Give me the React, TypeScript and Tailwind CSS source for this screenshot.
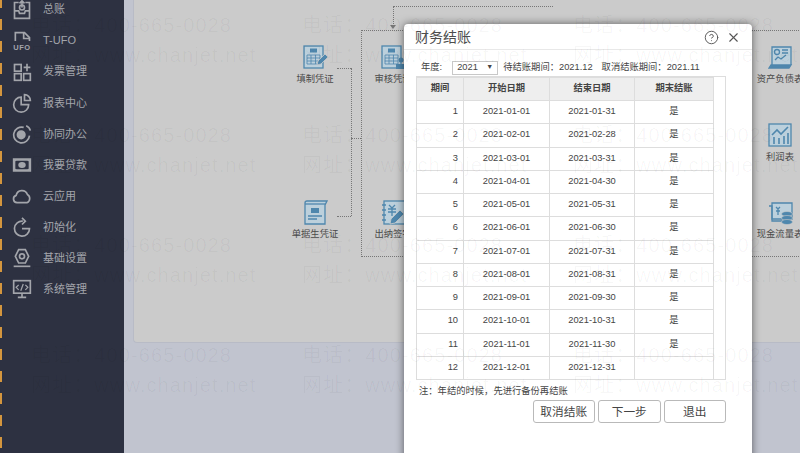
import React from 'react';
import { X, CircleHelp } from 'lucide-react';

const Svg = ({ children, className = 'h-5 w-5' }: { children: React.ReactNode; className?: string }) => (
  <svg viewBox="0 0 24 24" fill="none" stroke="currentColor" strokeWidth="2" className={className}>
    {children}
  </svg>
);

const menu: { label: string; icon: React.ReactNode }[] = [
  {
    label: '总账',
    icon: (
      <Svg>
        <path d="M8 3H3v19h18V3h-5" />
        <path d="M12 9V1M9 4l3-3 3 3" />
        <path d="M3 13h5l1 3h6l1-3h5" />
        <circle cx="12" cy="9" r="3" />
      </Svg>
    ),
  },
  {
    label: 'T-UFO',
    icon: (
      <svg viewBox="0 0 24 24" className="h-5 w-5" fill="none" stroke="currentColor" strokeWidth="2">
        <path d="M4 12V2h11l6 6v4" />
        <path d="M14 2v7h7" />
        <text x="12" y="23" textAnchor="middle" fontSize="9" fontWeight="700" fill="currentColor" stroke="none" letterSpacing="0.6">
          UFO
        </text>
      </svg>
    ),
  },
  {
    label: '发票管理',
    icon: (
      <Svg>
        <rect x="3" y="3" width="8" height="8" />
        <rect x="3" y="14" width="8" height="8" />
        <rect x="14" y="14" width="8" height="8" />
        <path d="M18 2v9M14 6.500h8" />
      </Svg>
    ),
  },
  {
    label: '报表中心',
    icon: (
      <Svg>
        <path d="M11 5a9 9 0 1 0 9 9h-9z" />
        <path d="M15 2a7 7 0 0 1 7 7h-7z" />
      </Svg>
    ),
  },
  {
    label: '协同办公',
    icon: (
      <Svg>
        <circle cx="11" cy="13" r="4.500" fill="currentColor" />
        <path d="M14 4a9.500 9.500 0 1 0 7 10" />
        <path d="M17 2a8 8 0 0 1 5 6" />
      </Svg>
    ),
  },
  {
    label: '我要贷款',
    icon: (
      <svg viewBox="0 0 24 24" className="h-5 w-5" fill="currentColor">
        <path d="M1 4h22v16H1zM4 7v10h16V7z" fillRule="evenodd" />
        <ellipse cx="12" cy="12" rx="4.500" ry="3.500" />
        <path d="M2 5h5L2 9zM22 5h-5l5 4zM2 19h5l-5-4zM22 19h-5l5-4z" />
      </svg>
    ),
  },
  {
    label: '云应用',
    icon: (
      <Svg>
        <path d="M6 20a4.500 4.500 0 0 1-1-8.800 7 7 0 0 1 13.500-1A5.500 5.500 0 0 1 18 20z" />
      </Svg>
    ),
  },
  {
    label: '初始化',
    icon: (
      <Svg>
        <path d="M13 5a9 9 0 1 0 8 9h-9" />
        <path d="M12 1l4 4-4 4" />
      </Svg>
    ),
  },
  {
    label: '基础设置',
    icon: (
      <Svg>
        <path d="M8 2h8l4 8-4 8H8L4 10z" />
        <circle cx="12" cy="10" r="3" />
        <path d="M2 22h20" />
      </Svg>
    ),
  },
  {
    label: '系统管理',
    icon: (
      <Svg>
        <rect x="2" y="2" width="20" height="15" />
        <path d="M12 17v5M7 22h10" />
        <path d="M8 7l-3 3 3 3M16 7l3 3-3 3M13.500 6l-3 8" strokeWidth="1.500" />
      </Svg>
    ),
  },
];

const DocIcon = ({ kind }: { kind: string }) => (
  <svg viewBox="0 0 25 25" className="h-[25px] w-[25px] text-[#4f87ad]" fill="none" stroke="currentColor" strokeWidth="1.300">
    {kind === 'fill' && (
      <>
        <rect x="1" y="1" width="19" height="22" fill="#bcd0dc" />
        <rect x="7" y="3.500" width="7" height="4" fill="#4f87ad" stroke="none" />
        <path d="M4 10h13v9H4zM4 13h13M4 16h13M8 10v9M12.500 10v9" strokeWidth="0.800" />
        <path d="M14 20l1-4 7-7 3 3-7 7z" fill="#4f87ad" stroke="#cbcbcb" strokeWidth="0.800" />
      </>
    )}
    {kind === 'audit' && (
      <>
        <rect x="1" y="1" width="19" height="22" fill="#bcd0dc" />
        <rect x="7" y="3.500" width="7" height="4" fill="#4f87ad" stroke="none" />
        <path d="M4 10h13v9H4zM4 13h13M4 16h13M8 10v9M12.500 10v9" strokeWidth="0.800" />
        <circle cx="20" cy="15" r="2.500" fill="#4f87ad" stroke="none" />
        <rect x="15" y="19" width="10" height="5" fill="#4f87ad" stroke="none" />
      </>
    )}
    {kind === 'receipt' && (
      <>
        <path d="M2 24V3a2 2 0 0 1 2-2h20l-2 4v19H2z" fill="#bcd0dc" />
        <path d="M2 4h20" />
        <rect x="8" y="8" width="8" height="5" fill="#4f87ad" stroke="none" />
        <path d="M5 16h14M5 19h9" />
      </>
    )}
    {kind === 'cash' && (
      <>
        <rect x="3" y="1" width="21" height="23" fill="#bcd0dc" />
        <path d="M1 5h4M1 10h4M1 15h4M1 20h4" />
        <path d="M8 5l3 3 3-3M7 9h8M7 12h8M11 8v8" />
        <path d="M9 24l1-5 9-9 4 4-9 9z" fill="#4f87ad" stroke="#cbcbcb" strokeWidth="0.800" />
      </>
    )}
    {kind === 'balance' && (
      <>
        <path d="M4 20V2h19v18" fill="#bcd0dc" />
        <path d="M1 23l2-3h20l-2 3z" fill="#4f87ad" />
        <circle cx="9" cy="7" r="2.500" />
        <path d="M14 5h6M14 8h6M7 15l3-3 3 2 5-4" />
      </>
    )}
    {kind === 'profit' && (
      <>
        <rect x="1" y="1" width="22" height="22" fill="#bcd0dc" />
        <path d="M4 12l5-5 4 4 7-7" strokeWidth="1.600" />
        <path d="M6 14v7M11 15v6M16 13v8M20 10v11" strokeWidth="1.600" />
      </>
    )}
    {kind === 'flow' && (
      <>
        <path d="M4 3h20v16H4z" fill="#bcd0dc" />
        <path d="M1 6h3v15h12" />
        <path d="M8 7l2 2 2-2M8 11h4M10 9v6" />
        <ellipse cx="19" cy="14" rx="5.500" ry="2.500" fill="#4f87ad" stroke="#cbcbcb" strokeWidth="0.600" />
        <ellipse cx="19" cy="18" rx="5.500" ry="2.500" fill="#4f87ad" stroke="#cbcbcb" strokeWidth="0.600" />
        <ellipse cx="19" cy="22" rx="5.500" ry="2.500" fill="#4f87ad" stroke="#cbcbcb" strokeWidth="0.600" />
      </>
    )}
  </svg>
);

const Node = ({ kind, label, className }: { kind: string; label: string; className: string }) => (
  <div className={`absolute flex w-[70px] flex-col items-center gap-[3px] text-[9.300px] leading-[12px] whitespace-nowrap text-[#4a4a4a] ${className}`}>
    <DocIcon kind={kind} />
    <span>{label}</span>
  </div>
);

const months = [
  ['2021-01-01', '2021-01-31'],
  ['2021-02-01', '2021-02-28'],
  ['2021-03-01', '2021-03-31'],
  ['2021-04-01', '2021-04-30'],
  ['2021-05-01', '2021-05-31'],
  ['2021-06-01', '2021-06-30'],
  ['2021-07-01', '2021-07-31'],
  ['2021-08-01', '2021-08-31'],
  ['2021-09-01', '2021-09-30'],
  ['2021-10-01', '2021-10-31'],
  ['2021-11-01', '2021-11-30'],
  ['2021-12-01', '2021-12-31'],
];

const Watermark = () => (
  <div className="pointer-events-none absolute inset-0 z-30 overflow-hidden">
    <div className="ml-[-240px] mt-[14px] grid w-[1300px] grid-cols-[repeat(4,271px)] auto-rows-[110px]">
      {Array.from({ length: 16 }).map((_, i) => (
        <div key={i} className="flex flex-col gap-[8px] text-[20px] leading-[22px] tracking-[1.100px] whitespace-nowrap text-black/[0.035]">
          <span>电话：400-665-0028</span>
          <span>网址：www.chanjet.net</span>
        </div>
      ))}
    </div>
  </div>
);

export default function App() {
  return (
    <div className="relative flex h-[453px] w-[800px] overflow-hidden bg-[#c1c4cf] font-['Liberation_Sans','Noto_Sans_CJK_SC',sans-serif]">
      <aside className="h-full w-[124px] shrink-0 bg-[#2d3141] text-[#a3a5ab]">
        <div className="flex h-full">
          <div className="h-full w-[2px] bg-[repeating-linear-gradient(to_bottom,#d4963e_0,#d4963e_8px,transparent_8px,transparent_19px,#d4963e_19px,#d4963e_22px)]" />
          <nav className="mt-[-6px] flex flex-col">
            {menu.map((m) => (
              <div key={m.label} className="flex h-[31.100px] items-center gap-[10px] pl-[10px] text-[11px]">
                <span className="flex w-[20px] justify-center">{m.icon}</span>
                <span className="ml-[1px]">{m.label}</span>
              </div>
            ))}
          </nav>
        </div>
      </aside>

      <main className="flex-1 pl-[9px]">
        <div className="relative h-[343px] rounded-bl-[4px] border-b border-l border-[#b8bbc6] bg-[#cbcbcb]">
          <Node kind="fill" label="填制凭证" className="left-[146px] top-[45px]" />
          <Node kind="audit" label="审核凭证" className="left-[224px] top-[45px]" />
          <Node kind="receipt" label="单据生凭证" className="left-[146px] top-[200px]" />
          <Node kind="cash" label="出纳签字" className="left-[224px] top-[200px]" />
          <Node kind="balance" label="资产负债表" className="left-[611px] top-[45px]" />
          <Node kind="profit" label="利润表" className="left-[611px] top-[123px]" />
          <Node kind="flow" label="现金流量表" className="left-[611px] top-[200px]" />

          {/* connectors */}
          <div className="absolute left-[203px] top-[68px] h-0 w-[14px] border-t border-dotted border-[#777]" />
          <div className="absolute left-[203px] top-[216px] h-0 w-[14px] border-t border-dotted border-[#777]" />
          <div className="absolute left-[217px] top-[68px] h-[148px] w-0 border-l border-dotted border-[#777]" />
          <div className="absolute left-[217px] top-[138px] h-0 w-[10px] border-t border-dotted border-[#777]" />
          <div className="absolute left-[227px] top-[30px] h-[227px] w-[460px] border border-dotted border-[#777]" />
          <div className="absolute left-[259px] top-[6px] h-[20px] w-[160px] border-l border-t border-dotted border-[#777]" />
          <div className="absolute left-[256px] top-[25px] h-0 w-0 border-x-[3.500px] border-t-[4px] border-x-transparent border-t-[#777]" />
        </div>
      </main>

      <section className="absolute left-[404px] top-[24px] z-20 h-[440px] w-[348px] rounded-[4px] bg-white px-[12px] shadow-[0_0_8px_rgba(0,0,0,0.55)]">
        <header className="-mx-[12px] flex h-[26px] items-center justify-between border-b border-[#e8e8e8] pl-[11px] pr-[11px] pt-[1px]">
          <h1 className="text-[14px] font-normal text-[#4d4d4d]">财务结账</h1>
          <div className="flex items-center gap-[7px] text-[#555]">
            <CircleHelp size={15} strokeWidth={1.500} />
            <X size={15} strokeWidth={1.800} />
          </div>
        </header>

        <div className="flex h-[26px] items-center whitespace-nowrap pl-[5px] pt-[9px] text-[9.300px] text-[#444]">
          <span>年度:</span>
          <div className="ml-[10px] flex h-[14px] w-[46px] items-center justify-between border border-[#c8c8c8] px-[4px] text-[9.300px]">
            <span>2021</span>
            <span className="text-[7px]">▼</span>
          </div>
          <span className="ml-[5px]">待结账期间：2021.12</span>
          <span className="ml-[9px]">取消结账期间：2021.11</span>
        </div>

        <div className="h-[304px] w-[310px] border-y border-r border-[#dddddd]">
          <table className="w-[297px] table-fixed border-collapse text-[9.300px] text-[#444]">
            <thead>
              <tr className="h-[23px] bg-[#eeeeee]">
                <th className="w-[47px] border border-[#dddddd] font-bold">期间</th>
                <th className="w-[86px] border border-[#dddddd] font-bold">开始日期</th>
                <th className="w-[85px] border border-[#dddddd] font-bold">结束日期</th>
                <th className="w-[79px] border border-[#dddddd] font-bold">期末结账</th>
              </tr>
            </thead>
            <tbody>
              {months.map((m, i) => (
                <tr key={m[0]} className="h-[23.250px]">
                  <td className="border border-[#dddddd] pr-[5px] text-right">{i + 1}</td>
                  <td className="border border-[#dddddd] text-center">{m[0]}</td>
                  <td className="border border-[#dddddd] text-center">{m[1]}</td>
                  <td className="border border-[#dddddd] text-center">{i < 11 ? '是' : ''}</td>
                </tr>
              ))}
            </tbody>
          </table>
        </div>

        <p className="mt-[4px] pl-[3px] text-[9.300px] leading-[14px] text-[#444]">注：年结的时候，先进行备份再结账</p>

        <div className="mt-[2px] flex w-[310px] justify-end gap-[3px]">
          {['取消结账', '下一步', '退出'].map((b) => (
            <button key={b} className="h-[23px] w-[62.500px] rounded-[3px] border border-[#b9b9b9] bg-white text-[11.700px] text-[#444]">
              {b}
            </button>
          ))}
        </div>
      </section>

      <Watermark />
    </div>
  );
}
